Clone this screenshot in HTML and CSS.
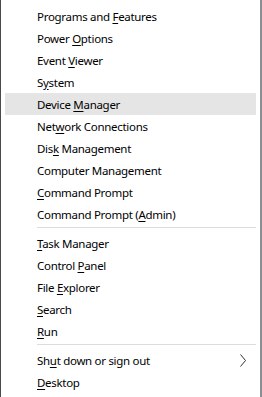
FILE: index.html
```html
<!DOCTYPE html>
<html lang="en">
<head>
    <meta charset="UTF-8">
    <meta name="viewport" content="width=device-width, initial-scale=1.0">
    <title>Quick Link Menu</title>
    <link rel="stylesheet" href="styles.css">
</head>
<body>
    <div class="menu">
        <div class="item"><span class="label">Programs and <u>F</u>eatures</span></div>
        <div class="item"><span class="label">Power <u>O</u>ptions</span></div>
        <div class="item"><span class="label">Event <u>V</u>iewer</span></div>
        <div class="item"><span class="label">S<u>y</u>stem</span></div>
        <div class="item active"><span class="label">Device <u>M</u>anager</span></div>
        <div class="item"><span class="label">Net<u>w</u>ork Connections</span></div>
        <div class="item"><span class="label">Dis<u>k</u> Management</span></div>
        <div class="item"><span class="label">Computer Mana<u>g</u>ement</span></div>
        <div class="item"><span class="label"><u>C</u>ommand Prompt</span></div>
        <div class="item"><span class="label">Command Prompt (<u>A</u>dmin)</span></div>

        <div class="separator"></div>

        <div class="item"><span class="label"><u>T</u>ask Manager</span></div>
        <div class="item"><span class="label">Control <u>P</u>anel</span></div>
        <div class="item"><span class="label">File <u>E</u>xplorer</span></div>
        <div class="item"><span class="label"><u>S</u>earch</span></div>
        <div class="item"><span class="label"><u>R</u>un</span></div>

        <div class="separator"></div>

        <div class="item">
            <span class="label">Sh<u>u</u>t down or sign out</span>
            <svg class="chevron" width="6" height="13" viewBox="0 0 6 13">
                <path d="M0.5 0.5 L5.5 6.5 L0.5 12.5" fill="none" stroke="#333" stroke-width="1"/>
            </svg>
        </div>
        <div class="item"><span class="label"><u>D</u>esktop</span></div>
    </div>
</body>
</html>
```

FILE: styles.css
```css
body {
    margin: 0;
    background: #ffffff;
    font-family: 'Noto Sans', sans-serif;
    font-size: 11.5px;
    color: #000000;
}

.menu {
    box-sizing: border-box;
    width: 262px;
    height: 397px;
    padding: 5px 4px 0 4px;
    border-left: 1px solid #4a4a4a;
    border-right: 2px solid #8a8f96;
    background: #ffffff;
}

.item {
    display: flex;
    align-items: center;
    justify-content: space-between;
    height: 22px;
    padding: 0 10px 0 32px;
    white-space: nowrap;
}

.label {
    letter-spacing: -0.3px;
}

.label u {
    text-decoration-thickness: 1px;
    text-underline-offset: 2px;
}

.item.active {
    background: #e5e5e5;
}

.chevron {
    display: block;
}

.separator {
    height: 1px;
    margin: 2px 0 4px 32px;
    background: #dcdcdc;
}
```
